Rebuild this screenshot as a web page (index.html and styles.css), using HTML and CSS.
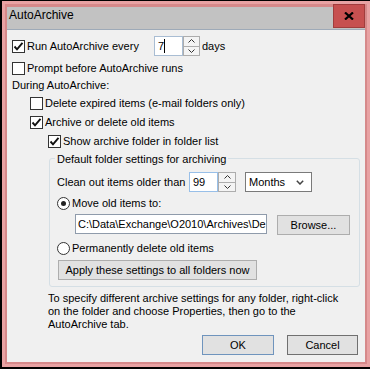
FILE: index.html
```html
<!doctype html>
<html lang='en-US'>
  <head>
    <title>AutoArchive</title>
    <meta charset='UTF-8'>
    <meta name='viewport' content='width=device-width, initial-scale=1'>
    <link rel="stylesheet" href="styles.css">
  </head>
  <body>
<div class=window>
  <div class=titlebar>AutoArchive</div>
  <div class=close>
    <svg width=10 height=8 viewBox="0 0 10 8"><path d="M1 0.5 L9 7.5 M9 0.5 L1 7.5" stroke="#000" stroke-width="2.2" fill="none"/></svg>
  </div>
  <div class=content>
    <div class="row r1">
      <span class="cb on"><svg width=11 height=11 viewBox="0 0 11 11"><path d="M1.5 5.5 L4 8.3 L9.5 1.8" stroke="#111" stroke-width="1.9" fill="none"/></svg></span>
      <span class=lbl-every>Run AutoArchive every</span>
      <span class=field-7>7<i class=caret></i></span>
      <span class="spin spin-7">
        <span class=up><svg width=7 height=4 viewBox="0 0 7 4"><path d="M0.5 3.5 L3.5 0.5 L6.5 3.5" stroke="#333" fill="none"/></svg></span>
        <span class=down><svg width=7 height=4 viewBox="0 0 7 4"><path d="M0.5 0.5 L3.5 3.5 L6.5 0.5" stroke="#333" fill="none"/></svg></span>
      </span>
      <span class=days>days</span>
    </div>
    <div class="row r2">
      <span class=cb></span>
      <span>Prompt before AutoArchive runs</span>
    </div>
    <div class="row r3">During AutoArchive:</div>
    <div class="row r4">
      <span class=cb></span>
      <span>Delete expired items (e-mail folders only)</span>
    </div>
    <div class="row r5">
      <span class="cb on"><svg width=11 height=11 viewBox="0 0 11 11"><path d="M1.5 5.5 L4 8.3 L9.5 1.8" stroke="#111" stroke-width="1.9" fill="none"/></svg></span>
      <span>Archive or delete old items</span>
    </div>
    <div class="row r6">
      <span class="cb on"><svg width=11 height=11 viewBox="0 0 11 11"><path d="M1.5 5.5 L4 8.3 L9.5 1.8" stroke="#111" stroke-width="1.9" fill="none"/></svg></span>
      <span>Show archive folder in folder list</span>
    </div>

    <div class=group>
      <span class=legend>Default folder settings for archiving</span>
      <div class="row clean">
        <span class=lbl-clean>Clean out items older than</span>
        <span class=field-99>99</span>
        <span class="spin spin-99">
          <span class=up><svg width=7 height=4 viewBox="0 0 7 4"><path d="M0.5 3.5 L3.5 0.5 L6.5 3.5" stroke="#333" fill="none"/></svg></span>
          <span class=down><svg width=7 height=4 viewBox="0 0 7 4"><path d="M0.5 0.5 L3.5 3.5 L6.5 0.5" stroke="#333" fill="none"/></svg></span>
        </span>
        <span class=select>Months<svg width=8 height=5 viewBox="0 0 8 5"><path d="M0.8 0.8 L4 4 L7.2 0.8" stroke="#444" stroke-width="1.5" fill="none"/></svg></span>
      </div>
      <div class="row radio1">
        <span class="rb on"></span>
        <span>Move old items to:</span>
      </div>
      <div class="row path">
        <span class=path-field>C:\Data\Exchange\O2010\Archives\De</span>
        <span class="btn browse">Browse...</span>
      </div>
      <div class="row radio2">
        <span class=rb></span>
        <span>Permanently delete old items</span>
      </div>
      <span class="btn apply">Apply these settings to all folders now</span>
    </div>

    <p class=note>To specify different archive settings for any folder, right-click<br>on the folder and choose Properties, then go to the<br>AutoArchive tab.</p>

    <div class=actions>
      <span class="btn ok">OK</span>
      <span class="btn cancel">Cancel</span>
    </div>
  </div>
</div>
  </body>
</html>
```

FILE: styles.css
```css
html, body {
  margin: 0;
  background: #000;
}
body {
  padding: 1px 0 0 2px;
  font: 11px/13px "Liberation Sans", Arial, sans-serif;
  color: #000;
}
.window {
  position: relative;
  width: 368px;
  height: 366px;
  box-sizing: border-box;
  border: 3px solid #e8a2a3;
  padding: 3px 2px 2px 2px;
  background: #d6898a;
  display: flex;
  flex-direction: column;
}
.titlebar {
  height: 22px;
  padding-left: 2px;
  background: #c2c2c2;
  border-bottom: 1px solid #9eaab8;
  font-size: 12px;
  line-height: 16px;
}
.close {
  position: absolute;
  top: 0;
  right: 2px;
  width: 32px;
  height: 24px;
  box-sizing: border-box;
  background: #c75050;
  border: 1px solid #a13d3d;
  display: flex;
  align-items: center;
  justify-content: center;
}
.content {
  flex: 1;
  background: #f0f0f0;
  display: flex;
  flex-direction: column;
  padding: 6px 0 0 5px;
}
.row {
  display: flex;
  align-items: center;
  white-space: nowrap;
}
.cb, .rb {
  flex: none;
  width: 13px;
  height: 13px;
  box-sizing: border-box;
  border: 1px solid #333;
  background: #fff;
  margin-right: 2px;
  display: flex;
  align-items: center;
  justify-content: center;
}
.rb {
  border-radius: 50%;
}
.rb.on::after {
  content: '';
  width: 5px;
  height: 5px;
  border-radius: 50%;
  background: #222;
}

.r1 { height: 20px; }
.r2 { height: 13px; margin-top: 6px; }
.r3 { height: 13px; margin-top: 4px; }
.r4 { height: 13px; margin-top: 5px; margin-left: 18px; }
.r5 { height: 13px; margin-top: 6px; margin-left: 18px; }
.r6 { height: 13px; margin-top: 6px; margin-left: 36px; }

.lbl-every { width: 127px; }
.lbl-clean { width: 132px; }

.field-7, .field-99, .path-field, .select {
  box-sizing: border-box;
  height: 20px;
  background: #fff;
  line-height: 18px;
  padding-left: 3px;
}
.field-7 {
  width: 29px;
  border: 1px solid #a9bdd3;
  display: flex;
  align-items: center;
}
.caret {
  width: 0;
  height: 14px;
  border-left: 1px solid #000;
}
.field-99 {
  width: 29px;
  border: 1px solid #98bfe8;
}
.spin {
  display: flex;
  flex-direction: column;
  height: 20px;
}
.spin-7 { width: 17px; }
.spin-99 { width: 18px; }
.spin > span {
  flex: 1;
  border: 1px solid #adadad;
  background: #f4f4f4;
  display: flex;
  align-items: center;
  justify-content: center;
}
.spin > .down {
  border-top: none;
}
.days {
  margin-left: 2px;
}

.group {
  margin: 10px 5px 0 37px;
  border: 1px solid #d5dfe5;
  border-radius: 3px;
  padding: 0 0 6px 7px;
  display: flex;
  flex-direction: column;
  align-items: flex-start;
}
.legend {
  margin: -6px 0 0 -2px;
  padding: 0 2px;
  background: #f0f0f0;
  white-space: nowrap;
}
.clean { height: 20px; margin-top: 6px; }
.select {
  width: 67px;
  margin-left: 9px;
  border: 1px solid #7a7a7a;
  display: flex;
  align-items: center;
  justify-content: space-between;
  padding: 0 7px 0 3px;
}
.radio1 { height: 13px; margin-top: 5px; }
.path {
  height: 21px;
  margin: 4px 0 0 18px;
  align-items: flex-start;
}
.path-field {
  width: 192px;
  border: 1px solid #8f9bab;
  padding-left: 2px;
  overflow: hidden;
}
.radio2 { height: 13px; margin-top: 7px; }

.btn {
  box-sizing: border-box;
  height: 20px;
  background: #e1e1e1;
  border: 1px solid #adadad;
  text-align: center;
  line-height: 18px;
  white-space: nowrap;
}
.browse {
  width: 73px;
  margin-left: 10px;
  align-self: flex-end;
}
.apply {
  width: 199px;
  margin: 5px 0 0 1px;
}
.note {
  margin: 5px 0 0 36px;
  white-space: nowrap;
}
.actions {
  margin-top: 4px;
  padding-right: 7px;
  display: flex;
  justify-content: flex-end;
  gap: 13px;
}
.ok {
  width: 72px;
  border-color: #6f94bd;
}
.cancel {
  width: 71px;
  border-color: #707070;
}
```
